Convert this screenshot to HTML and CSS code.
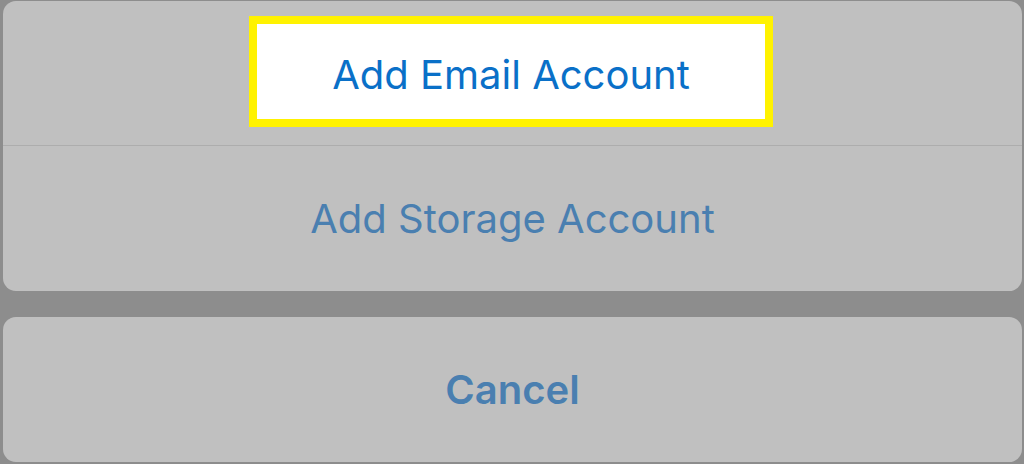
FILE: index.html
```html
<!DOCTYPE html>
<html lang="en">
<head>
    <meta charset="UTF-8">
    <meta name="viewport" content="width=device-width, initial-scale=1.0">
    <title>Add Account</title>
    <link rel="stylesheet" href="styles.css">
</head>
<body>

    <div class="sheet">
        <div class="group">
            <div class="action action-first">
                <div class="highlight">
                    <span class="label label-email">Add Email Account</span>
                </div>
            </div>
            <div class="action">
                <span class="label">Add Storage Account</span>
            </div>
        </div>

        <div class="group cancel">
            <div class="action">
                <span class="label label-bold">Cancel</span>
            </div>
        </div>
    </div>

</body>
</html>
```

FILE: styles.css
```css
body {
    font-family: Inter, "Noto Sans", sans-serif;
    background-color: #8d8d8d;
    margin: 0;
    padding: 0;
    height: 464px;
    overflow: hidden;
}
.sheet {
    display: flex;
    flex-direction: column;
    gap: 26px;
    padding: 1px 2px 0 3px;
}
.group {
    background-color: #c0c0c0;
    border-radius: 13px;
    overflow: hidden;
}
.action {
    height: 145px;
    display: flex;
    align-items: center;
    justify-content: center;
}
.action-first {
    height: 144px;
    border-bottom: 1px solid #adadad;
    align-items: flex-start;
}
.highlight {
    margin-top: 15px;
    margin-right: 3px;
    width: 508px;
    height: 95px;
    border: 8px solid #fff200;
    background-color: #fff;
    display: flex;
    align-items: center;
    justify-content: center;
}
.label {
    font-size: 40px;
    color: #4a7fb0;
}
.label-email {
    color: #0a70c8;
    margin-top: 6px;
}
.label-bold {
    font-weight: 600;
}
```
